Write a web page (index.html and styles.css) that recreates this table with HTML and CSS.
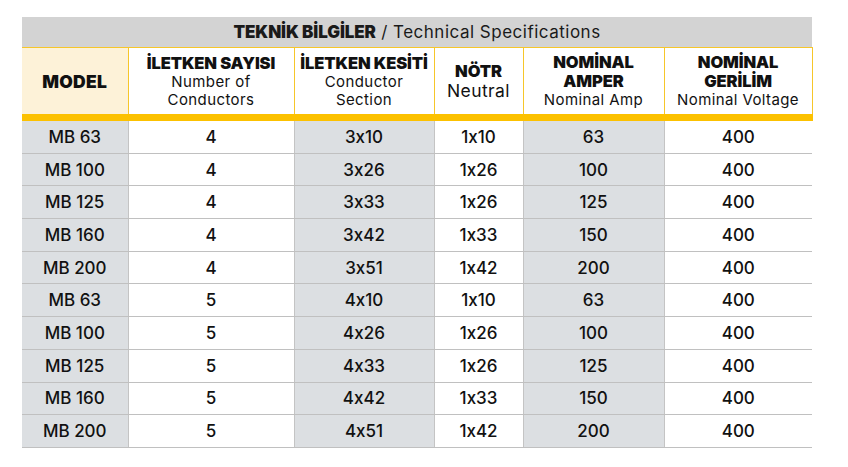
FILE: index.html
```html
<!DOCTYPE html>
<html lang="tr">
<head>
<meta charset="utf-8">
<link rel="stylesheet" href="styles.css">
</head>
<body>
<table class="spec">
  <colgroup>
    <col class="c1"><col class="c2"><col class="c3"><col class="c4"><col class="c5"><col class="c6">
  </colgroup>
  <thead>
    <tr class="title-row">
      <th colspan="6"><b>TEKNİK BİLGİLER</b> / Technical Specifications</th>
    </tr>
    <tr class="head-row">
      <th class="model-h"><b>MODEL</b></th>
      <th><b>İLETKEN SAYISI</b><span>Number of<br>Conductors</span></th>
      <th><b>İLETKEN KESİTİ</b><span>Conductor<br>Section</span></th>
      <th><b>NÖTR</b><span class="big">Neutral</span></th>
      <th><b>NOMİNAL<br>AMPER</b><span>Nominal Amp</span></th>
      <th><b>NOMİNAL<br>GERİLİM</b><span>Nominal Voltage</span></th>
    </tr>
  </thead>
  <tbody>
    <tr><td>MB 63</td><td>4</td><td>3x10</td><td>1x10</td><td>63</td><td>400</td></tr>
    <tr><td>MB 100</td><td>4</td><td>3x26</td><td>1x26</td><td>100</td><td>400</td></tr>
    <tr><td>MB 125</td><td>4</td><td>3x33</td><td>1x26</td><td>125</td><td>400</td></tr>
    <tr><td>MB 160</td><td>4</td><td>3x42</td><td>1x33</td><td>150</td><td>400</td></tr>
    <tr><td>MB 200</td><td>4</td><td>3x51</td><td>1x42</td><td>200</td><td>400</td></tr>
    <tr><td>MB 63</td><td>5</td><td>4x10</td><td>1x10</td><td>63</td><td>400</td></tr>
    <tr><td>MB 100</td><td>5</td><td>4x26</td><td>1x26</td><td>100</td><td>400</td></tr>
    <tr><td>MB 125</td><td>5</td><td>4x33</td><td>1x26</td><td>125</td><td>400</td></tr>
    <tr><td>MB 160</td><td>5</td><td>4x42</td><td>1x33</td><td>150</td><td>400</td></tr>
    <tr><td>MB 200</td><td>5</td><td>4x51</td><td>1x42</td><td>200</td><td>400</td></tr>
  </tbody>
</table>
</body>
</html>
```

FILE: styles.css
```css
html, body {
  margin: 0;
  background: #ffffff;
}
body {
  padding: 17px 0 0 22px;
  font-family: "Inter", "Liberation Sans", sans-serif;
  font-feature-settings: "calt" 0;
  color: #111111;
}
.spec {
  width: 790px;
  border-collapse: collapse;
  table-layout: fixed;
}
.c1 { width: 106px; }
.c2 { width: 166px; }
.c3 { width: 140px; }
.c4 { width: 89px; }
.c5 { width: 141px; }
.c6 { width: 148px; }

.title-row th {
  height: 30px;
  padding: 0;
  background: #d3d3d3;
  font-size: 17px;
  font-weight: 400;
  letter-spacing: 0.5px;
  text-align: center;
  border-bottom: 1px solid #f6c62a;
  color: #1a1a1a;
}
.title-row b {
  font-weight: 900;
  letter-spacing: -0.1px;
}

.head-row th {
  height: 66px;
  padding: 0;
  background: #ffffff;
  border-left: 1px solid #f6c62a;
  border-right: 1px solid #f6c62a;
  border-bottom: 7px solid #fcc100;
  text-align: center;
  vertical-align: middle;
  line-height: 18px;
}
.head-row th:first-child { border-left: none; }
.head-row th.model-h {
  background: #fdf2d8;
}
.head-row b {
  display: block;
  font-weight: 900;
  font-size: 16.5px;
  line-height: 19px;
  letter-spacing: -0.1px;
}
.head-row th.model-h b {
  font-size: 17.5px;
  letter-spacing: 0.3px;
}
.head-row span {
  display: block;
  font-weight: 400;
  font-size: 15px;
  line-height: 18px;
  letter-spacing: 0.4px;
}
.head-row span.big {
  font-size: 17.5px;
  line-height: 19px;
  letter-spacing: 0.4px;
}

tbody td {
  height: 31.7px;
  padding: 0;
  text-align: center;
  vertical-align: middle;
  font-size: 17px;
  font-weight: 500;
  border-bottom: 1px solid #c0c0c0;
  border-left: 1px solid #c4c4c4;
  background: #ffffff;
}
tbody td:first-child {
  border-left: none;
}
tbody td:nth-child(1),
tbody td:nth-child(3),
tbody td:nth-child(5) {
  background: #dcdfe2;
}
```
